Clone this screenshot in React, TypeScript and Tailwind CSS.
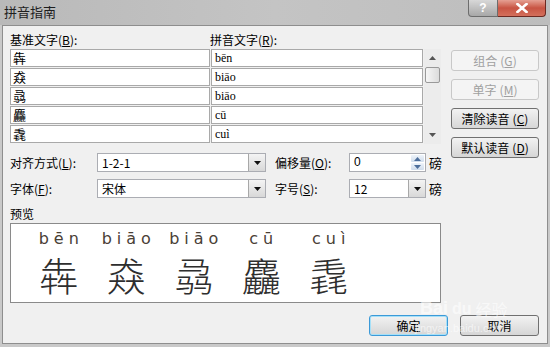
import React from "react";

const CJK = { fontFamily: '"Noto Sans CJK SC", "Noto Sans", sans-serif' };
const SERIF = { fontFamily: '"Liberation Serif", "Noto Sans CJK SC", serif' };

function Acc({ k }: { k: string }) {
  return (
    <span>
      (<span className="underline underline-offset-1">{k}</span>)
    </span>
  );
}

function DropBtn() {
  return (
    <div className="w-[17px] h-full border-l border-[#a8a8a8] bg-gradient-to-b from-[#f4f4f4] to-[#d8d8d8] flex items-center justify-center">
      <svg width="7" height="4" viewBox="0 0 7 4">
        <path d="M0 0 H7 L3.5 4 Z" fill="#111" />
      </svg>
    </div>
  );
}

function Combo({ value, w }: { value: string; w: string }) {
  return (
    <div className={`${w} h-[19px] bg-white border border-[#abadb3] flex items-stretch`}>
      <div className="flex-1 pl-[4px] text-[12px] leading-[17px] text-black" style={CJK}>
        {value}
      </div>
      <DropBtn />
    </div>
  );
}

function Btn({ label, k, disabled, focus, w = "w-[88px]" }: { label: string; k?: string; disabled?: boolean; focus?: boolean; w?: string }) {
  return (
    <div
      className={`${w} h-[21px] shrink-0 rounded-[3px] border flex items-center justify-center text-[12px] ${
        disabled
          ? "border-[#c8c8c8] bg-[#f4f4f4] text-[#a0a0a0]"
          : focus
          ? "border-[#3c9ad8] bg-gradient-to-b from-[#f2f2f2] to-[#d6d6d6] text-black shadow-[inset_0_0_0_1px_#a6e0f8]"
          : "border-[#707070] bg-gradient-to-b from-[#f2f2f2] to-[#d6d6d6] text-black"
      }`}
      style={CJK}
    >
      {label}
      {k ? <span className="ml-[3px]"><Acc k={k} /></span> : null}
    </div>
  );
}

const rows = [
  ["犇", "bēn"],
  ["猋", "biāo"],
  ["骉", "biāo"],
  ["麤", "cū"],
  ["毳", "cuì"],
];

export default function App() {
  return (
    <div className="w-[550px] h-[347px] bg-[#c9c9c9] flex flex-col overflow-hidden relative">
      {/* title bar */}
      <div className="h-[25px] shrink-0 flex items-start bg-gradient-to-r from-[#b9b9b9] via-[#c4c4c4] to-[#bdbdbd]">
        <div className="pl-[4px] pt-[4px] text-[13px] leading-[16px] text-[#1e1e1e]" style={CJK}>
          拼音指南
        </div>
        <div className="ml-auto mr-[4px] flex">
          <div className="w-[30px] h-[17px] rounded-bl-[4px] border border-t-0 border-[#6d6d6d] bg-gradient-to-b from-[#d8d8d8] to-[#a8a8a8] flex items-center justify-center text-white text-[12px] font-bold leading-none" style={{ fontFamily: '"Liberation Sans", sans-serif' }}>
            ?
          </div>
          <div className="w-[48px] h-[17px] rounded-br-[4px] border border-l-0 border-t-0 border-[#6d2a22] bg-gradient-to-b from-[#e5a093] via-[#c85443] to-[#d4705c] flex items-center justify-center">
            <svg width="12" height="10" viewBox="0 0 12 10">
              <path d="M1.5 1 L10.5 9 M10.5 1 L1.5 9" stroke="#fff" strokeWidth="2.6" strokeLinecap="square" />
            </svg>
          </div>
        </div>
      </div>

      {/* client area */}
      <div className="mx-[2px] h-[319px] shrink-0 border border-[#8e8e8e] bg-[#f0f0f0] pl-[7px] pr-[7px] flex flex-col" style={CJK}>
        <div className="flex items-start h-[119px] shrink-0">
          <div className="w-[431px] flex flex-col">
            <div className="h-[23px] pt-[6px] flex text-[12px] leading-[16px] text-black">
              <div className="w-[200px]">基准文字<Acc k="B" />:</div>
              <div>拼音文字<Acc k="R" />:</div>
            </div>
            <div className="flex">
              <div className="w-[413px] flex flex-col">
                {rows.map(([c, p], i) => (
                  <div key={i} className="flex h-[19px] gap-[1px]">
                    <div className="w-[200px] h-[18px] bg-white border border-[#a9a9a9] pl-[2px] text-[13px] leading-[16px] text-black" style={CJK}>
                      {c}
                    </div>
                    <div className="w-[212px] h-[18px] bg-white border border-[#a9a9a9] pl-[3px] text-[12px] leading-[16px] text-black" style={SERIF}>
                      {p}
                    </div>
                  </div>
                ))}
              </div>
              <div className="ml-[1px] w-[17px] h-[95px] bg-[#ececec] flex flex-col items-center">
                <div className="h-[18px] flex items-center justify-center">
                  <svg width="7" height="4" viewBox="0 0 7 4"><path d="M0 4 H7 L3.5 0 Z" fill="#555" /></svg>
                </div>
                <div className="w-[15px] h-[16px] rounded-[2px] border border-[#999] bg-gradient-to-r from-[#f6f6f6] to-[#dcdcdc]" />
                <div className="flex-1" />
                <div className="h-[18px] flex items-center justify-center">
                  <svg width="7" height="4" viewBox="0 0 7 4"><path d="M0 0 H7 L3.5 4 Z" fill="#555" /></svg>
                </div>
              </div>
            </div>
          </div>
          <div className="ml-[10px] pt-[24px] flex flex-col gap-[8px]">
            <Btn label="组合" k="G" disabled />
            <Btn label="单字" k="M" disabled />
            <Btn label="清除读音" k="C" />
            <Btn label="默认读音" k="D" />
          </div>
        </div>

        {/* options */}
        <div className="mt-[8px] flex items-center h-[19px] text-[12px] text-black">
          <div className="w-[87px]">对齐方式<Acc k="L" />:</div>
          <Combo value="1-2-1" w="w-[169px]" />
          <div className="ml-[9px] w-[74px]">偏移量<Acc k="O" />:</div>
          <div className="w-[77px] h-[19px] bg-white border border-[#abadb3] flex">
            <div className="flex-1 pl-[4px] text-[12px] leading-[17px]" style={{ fontFamily: '"Liberation Sans", sans-serif' }}>0</div>
            <div className="w-[15px] flex flex-col gap-[1px] p-[1px]">
              <div className="flex-1 rounded-[1px] bg-gradient-to-b from-[#eef4fa] to-[#cfdcec] flex items-center justify-center">
                <svg width="7" height="4" viewBox="0 0 7 4"><path d="M0 4 H7 L3.5 0 Z" fill="#4d6f9c" /></svg>
              </div>
              <div className="flex-1 rounded-[1px] bg-gradient-to-b from-[#eef4fa] to-[#cfdcec] flex items-center justify-center">
                <svg width="7" height="4" viewBox="0 0 7 4"><path d="M0 0 H7 L3.5 4 Z" fill="#4d6f9c" /></svg>
              </div>
            </div>
          </div>
          <div className="ml-[3px] text-[13px]">磅</div>
        </div>
        <div className="mt-[7px] flex items-center h-[19px] text-[12px] text-black">
          <div className="w-[87px]">字体<Acc k="F" />:</div>
          <Combo value="宋体" w="w-[169px]" />
          <div className="ml-[9px] w-[74px]">字号<Acc k="S" />:</div>
          <Combo value="12" w="w-[77px]" />
          <div className="ml-[3px] text-[13px]">磅</div>
        </div>

        <div className="mt-[8px] h-[16px] text-[12px] leading-[16px] text-black">预览</div>
        <div className="mt-[1px] w-[431px] h-[80px] shrink-0 bg-white border border-[#8a8a8a] pl-[14px] pt-[6px] flex overflow-hidden">
          {rows.map(([c, p], i) => (
            <div key={i} className="w-[67.5px] flex flex-col items-center">
              <div className="h-[18px] text-[16px] leading-[18px] tracking-[5px] pl-[5px] text-[#4a4036]" style={{ fontFamily: '"DejaVu Sans", "Liberation Sans", sans-serif' }}>
                {p}
              </div>
              <div className="mt-[6px] h-[40px] text-[39px] leading-[40px] font-light text-[#2e2e2e]" style={CJK}>
                {c}
              </div>
            </div>
          ))}
        </div>

        <div className="mt-[12px] flex justify-end pr-[1px] gap-[12px]">
          <Btn label="确定" focus w="w-[79px]" />
          <Btn label="取消" w="w-[79px]" />
        </div>
      </div>

      {/* watermark */}
      <div className="absolute left-[420px] top-[299px] pointer-events-none text-white/60 leading-none">
        <div className="flex items-end gap-[4px]">
          <span className="text-[18px] font-bold" style={{ fontFamily: '"Liberation Sans", sans-serif' }}>Bai</span>
          <span className="text-[16px] font-bold" style={{ fontFamily: '"Liberation Sans", sans-serif' }}>du</span>
          <span className="text-[16px]" style={CJK}>经验</span>
        </div>
        <div className="text-[11px] mt-[6px] -ml-[5px]" style={{ fontFamily: '"Liberation Sans", sans-serif' }}>jingyan.baidu.com</div>
      </div>
    </div>
  );
}
